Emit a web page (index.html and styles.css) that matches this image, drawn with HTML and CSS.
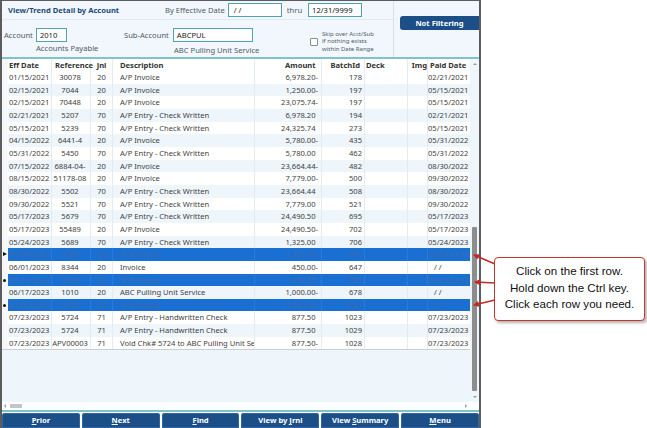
FILE: index.html
```html
<!DOCTYPE html>
<html>
<head>
<meta charset="utf-8">
<link rel="stylesheet" href="styles.css">
</head>
<body>
<div class="page">
  <div class="app">
    <div class="header">
      <div class="hleft">
        <div class="hrow1">
          <div class="title">View/Trend Detail by Account</div>
          <span class="lbl">By Effective Date</span>
          <div class="inp w54">&nbsp;/ /</div>
          <span class="lbl thru">thru</span>
          <div class="inp w54">12/31/9999</div>
        </div>
        <div class="hrow2">
          <div class="fgroup acct">
            <div class="fline"><span class="lbl">Account</span><div class="inp w31">2010</div></div>
            <div class="cap cap-acct">Accounts Payable</div>
          </div>
          <div class="fgroup sub">
            <div class="fline"><span class="lbl">Sub-Account</span><div class="inp w80">ABCPUL</div></div>
            <div class="cap cap-sub">ABC Pulling Unit Service</div>
          </div>
          <div class="skip">
            <span class="chk"></span>
            <span class="skiptext">Skip over Acct/Sub<br>if nothing exists<br>within Date Range</span>
          </div>
        </div>
      </div>
      <div class="hright">
        <div class="filterbtn">Not Filtering</div>
      </div>
    </div>
    <div class="teal"></div>
    <div class="gridwrap">
      <div class="table">
        <div class="row head">
          <span class="ind"></span><span class="c d">Eff Date</span><span class="c r hr">Reference</span><span class="c j">Jnl</span><span class="c ds">Description</span><span class="c a">Amount<i>-</i></span><span class="c b hb">BatchId</span><span class="c dk">Deck</span><span class="c im">Img</span><span class="c p hp">Paid Date</span>
        </div>
        <div class="rows">
          <div class="row"><span class="ind"></span><span class="c d">01/15/2021</span><span class="c r">30078</span><span class="c j">20</span><span class="c ds">A/P Invoice</span><span class="c a">6,978.20-</span><span class="c b">178</span><span class="c dk"></span><span class="c im"></span><span class="c p">02/21/2021</span></div>
          <div class="row alt"><span class="ind"></span><span class="c d">02/15/2021</span><span class="c r">7044</span><span class="c j">20</span><span class="c ds">A/P Invoice</span><span class="c a">1,250.00-</span><span class="c b">197</span><span class="c dk"></span><span class="c im"></span><span class="c p">05/15/2021</span></div>
          <div class="row"><span class="ind"></span><span class="c d">02/15/2021</span><span class="c r">70448</span><span class="c j">20</span><span class="c ds">A/P Invoice</span><span class="c a">23,075.74-</span><span class="c b">197</span><span class="c dk"></span><span class="c im"></span><span class="c p">05/15/2021</span></div>
          <div class="row alt"><span class="ind"></span><span class="c d">02/21/2021</span><span class="c r">5207</span><span class="c j">70</span><span class="c ds">A/P Entry - Check Written</span><span class="c a">6,978.20<i>-</i></span><span class="c b">194</span><span class="c dk"></span><span class="c im"></span><span class="c p">02/21/2021</span></div>
          <div class="row"><span class="ind"></span><span class="c d">05/15/2021</span><span class="c r">5239</span><span class="c j">70</span><span class="c ds">A/P Entry - Check Written</span><span class="c a">24,325.74<i>-</i></span><span class="c b">273</span><span class="c dk"></span><span class="c im"></span><span class="c p">05/15/2021</span></div>
          <div class="row alt"><span class="ind"></span><span class="c d">04/15/2022</span><span class="c r">6441-4</span><span class="c j">20</span><span class="c ds">A/P Invoice</span><span class="c a">5,780.00-</span><span class="c b">435</span><span class="c dk"></span><span class="c im"></span><span class="c p">05/31/2022</span></div>
          <div class="row"><span class="ind"></span><span class="c d">05/31/2022</span><span class="c r">5450</span><span class="c j">70</span><span class="c ds">A/P Entry - Check Written</span><span class="c a">5,780.00<i>-</i></span><span class="c b">462</span><span class="c dk"></span><span class="c im"></span><span class="c p">05/31/2022</span></div>
          <div class="row alt"><span class="ind"></span><span class="c d">07/15/2022</span><span class="c r">6884-04-</span><span class="c j">20</span><span class="c ds">A/P Invoice</span><span class="c a">23,664.44-</span><span class="c b">482</span><span class="c dk"></span><span class="c im"></span><span class="c p">08/30/2022</span></div>
          <div class="row"><span class="ind"></span><span class="c d">08/15/2022</span><span class="c r">51178-08</span><span class="c j">20</span><span class="c ds">A/P Invoice</span><span class="c a">7,779.00-</span><span class="c b">500</span><span class="c dk"></span><span class="c im"></span><span class="c p">09/30/2022</span></div>
          <div class="row alt"><span class="ind"></span><span class="c d">08/30/2022</span><span class="c r">5502</span><span class="c j">70</span><span class="c ds">A/P Entry - Check Written</span><span class="c a">23,664.44<i>-</i></span><span class="c b">508</span><span class="c dk"></span><span class="c im"></span><span class="c p">08/30/2022</span></div>
          <div class="row"><span class="ind"></span><span class="c d">09/30/2022</span><span class="c r">5521</span><span class="c j">70</span><span class="c ds">A/P Entry - Check Written</span><span class="c a">7,779.00<i>-</i></span><span class="c b">521</span><span class="c dk"></span><span class="c im"></span><span class="c p">09/30/2022</span></div>
          <div class="row alt"><span class="ind"></span><span class="c d">05/17/2023</span><span class="c r">5679</span><span class="c j">70</span><span class="c ds">A/P Entry - Check Written</span><span class="c a">24,490.50<i>-</i></span><span class="c b">695</span><span class="c dk"></span><span class="c im"></span><span class="c p">05/17/2023</span></div>
          <div class="row"><span class="ind"></span><span class="c d">05/17/2023</span><span class="c r">55489</span><span class="c j">20</span><span class="c ds">A/P Invoice</span><span class="c a">24,490.50-</span><span class="c b">702</span><span class="c dk"></span><span class="c im"></span><span class="c p">05/17/2023</span></div>
          <div class="row alt"><span class="ind"></span><span class="c d">05/24/2023</span><span class="c r">5689</span><span class="c j">70</span><span class="c ds">A/P Entry - Check Written</span><span class="c a">1,325.00<i>-</i></span><span class="c b">706</span><span class="c dk"></span><span class="c im"></span><span class="c p">05/24/2023</span></div>
          <div class="row sel"><span class="ind"><b class="tri"></b></span><span class="c d">05/24/2023</span><span class="c r">7060</span><span class="c j">20</span><span class="c ds">A/P Invoice</span><span class="c a">1,325.00-</span><span class="c b">702</span><span class="c dk"></span><span class="c im"></span><span class="c p">05/24/2023</span></div>
          <div class="row"><span class="ind"></span><span class="c d">06/01/2023</span><span class="c r">8344</span><span class="c j">20</span><span class="c ds">Invoice</span><span class="c a">450.00-</span><span class="c b">647</span><span class="c dk"></span><span class="c im"></span><span class="c p nd">/ /</span></div>
          <div class="row sel"><span class="ind"><b class="dot"></b></span><span class="c d">06/13/2023</span><span class="c r">8000</span><span class="c j">20</span><span class="c ds">A/P Invoice</span><span class="c a">877.50-</span><span class="c b">667</span><span class="c dk"></span><span class="c im"></span><span class="c p">07/23/2023</span></div>
          <div class="row alt"><span class="ind"></span><span class="c d">06/17/2023</span><span class="c r">1010</span><span class="c j">20</span><span class="c ds">ABC Pulling Unit Service</span><span class="c a">1,000.00-</span><span class="c b">678</span><span class="c dk"></span><span class="c im"></span><span class="c p nd">/ /</span></div>
          <div class="row sel"><span class="ind"><b class="dot"></b></span><span class="c d">07/05/2023</span><span class="c r">5720</span><span class="c j">20</span><span class="c ds">A/P Invoice</span><span class="c a">1,000.00<i>-</i></span><span class="c b">1021</span><span class="c dk"></span><span class="c im"></span><span class="c p nd">/ /</span></div>
          <div class="row"><span class="ind"></span><span class="c d">07/23/2023</span><span class="c r">5724</span><span class="c j">71</span><span class="c ds">A/P Entry - Handwritten Check</span><span class="c a">877.50<i>-</i></span><span class="c b">1023</span><span class="c dk"></span><span class="c im"></span><span class="c p">07/23/2023</span></div>
          <div class="row alt"><span class="ind"></span><span class="c d">07/23/2023</span><span class="c r">5724</span><span class="c j">71</span><span class="c ds">A/P Entry - Handwritten Check</span><span class="c a">877.50<i>-</i></span><span class="c b">1029</span><span class="c dk"></span><span class="c im"></span><span class="c p">07/23/2023</span></div>
          <div class="row last"><span class="ind"></span><span class="c d">07/23/2023</span><span class="c r">APV00003</span><span class="c j">71</span><span class="c ds">Void Chk# 5724 to ABC Pulling Unit Service</span><span class="c a">877.50-</span><span class="c b">1028</span><span class="c dk"></span><span class="c im"></span><span class="c p">07/23/2023</span></div>
        </div>
      </div>
      <div class="vscroll">
        <span class="arr up"></span>
        <span class="track"></span>
        <span class="thumb"></span>
        <span class="arr down"></span>
      </div>
    </div>
    <div class="hscroll">
      <span class="harr left"></span>
      <span class="hthumb"></span>
      <span class="hspace"></span>
      <span class="harr right"></span>
    </div>
    <div class="teal bottomline"></div>
    <div class="buttons">
      <div class="btn"><u>P</u>rior</div>
      <div class="btn"><u>N</u>ext</div>
      <div class="btn"><u>F</u>ind</div>
      <div class="btn">View by <u>J</u>rnl</div>
      <div class="btn">View <u>S</u>ummary</div>
      <div class="btn"><u>M</u>enu</div>
    </div>
  </div>

  <svg class="arrows" width="647" height="428" viewBox="0 0 647 428">
    <defs>
      <marker id="ah" markerWidth="6" markerHeight="6" refX="5" refY="3" orient="auto" markerUnits="userSpaceOnUse">
        <path d="M0,0 L6,3 L0,6 Z" fill="#c62828"/>
      </marker>
    </defs>
    <line x1="495" y1="264" x2="474" y2="255" stroke="#c62828" stroke-width="1.5" marker-end="url(#ah)"/>
    <line x1="495" y1="283" x2="475" y2="282" stroke="#c62828" stroke-width="1.5" marker-end="url(#ah)"/>
    <line x1="495" y1="300" x2="474" y2="305" stroke="#c62828" stroke-width="1.5" marker-end="url(#ah)"/>
  </svg>
  <div class="callout">Click on the first row.<br>Hold down the Ctrl key.<br>Click each row you need.</div>
</div>
</body>
</html>
```
FILE: styles.css
```css
* { box-sizing: border-box; }
html, body { margin: 0; padding: 0; background: #ffffff; }
.page {
  position: relative;
  width: 647px;
  height: 428px;
  overflow: hidden;
  font-family: "Noto Sans", "Open Sans", sans-serif;
  font-size: 7.6px;
  color: #3f3f3f;
}
.app {
  width: 481px;
  height: 428px;
  display: flex;
  flex-direction: column;
  border-left: 2px solid #5c5c5c;
  border-right: 2px solid #5c5c5c;
  border-top: 1px solid #5c5c5c;
  background: #eef6fc;
}
/* header */
.header {
  height: 56px;
  display: flex;
  background: #f1f7fc;
}
.hleft { width: 391px; display: flex; flex-direction: column; }
.hright { flex: 1; border-left: 1px solid #d6e1ea; padding-top: 15px; padding-left: 6px; }
.filterbtn {
  height: 14px;
  background: #1c4f87;
  color: #fff;
  font-weight: 700;
  text-align: center;
  line-height: 14px;
  border-radius: 3px 0 0 3px;
  font-size: 7.6px;
}
.hrow1 {
  height: 19px;
  display: flex;
  align-items: center;
  border-bottom: 1px solid #e1e9f0;
}
.title {
  width: 163px;
  padding-left: 6px;
  font-weight: 700;
  color: #1d4a78;
}
.lbl { color: #4f5b66; white-space: nowrap; }
.inp {
  height: 14px;
  border: 1px solid #4fa5ad;
  background: #fff;
  color: #222;
  line-height: 12px;
  padding-left: 3px;
  white-space: nowrap;
}
.hrow1 .lbl { margin-right: 3px; }
.hrow1 .thru { margin-left: 5px; margin-right: 6px; }
.w54 { width: 54px; }
.w31 { width: 31px; }
.w80 { width: 80px; }
.hrow2 { display: flex; padding-top: 8px; }
.fgroup { display: flex; flex-direction: column; }
.fline { display: flex; align-items: center; gap: 3px; }
.acct { padding-left: 2px; width: 122px; }
.cap { color: #4f5b66; }
.cap-acct { margin-left: 32px; margin-top: 1px; }
.sub { width: 186px; }
.sub .fline { gap: 4px; }
.cap-sub { margin-left: 50px; margin-top: 3px; }
.skip { display: flex; align-items: center; gap: 4px; margin-top: 2px; height: 24px; }
.chk {
  width: 8px; height: 8px;
  border: 1px solid #8c8c8c;
  border-radius: 1px;
  background: #fff;
}
.skiptext { font-size: 6px; line-height: 7.4px; color: #4f5b66; }
.teal { height: 2px; background: #7ec4c8; }
/* grid */
.gridwrap { height: 343px; display: flex; }
.table { width: 468px; display: flex; flex-direction: column; background: #eef6fc; }
.row {
  display: grid;
  grid-template-columns: 6px 44px 39px 22px 142px 67px 43px 43px 20px 42px;
  height: 12.67px;
  line-height: 12.67px;
  background: #ffffff;
}
.row.alt { background: #eef5fb; }
.row.head { height: 12px; line-height: 12px; background: #ffffff; font-weight: 700; color: #333; }
.row .ind { background: #f4f8fb; position: relative; }
.c {
  white-space: nowrap;
  overflow: hidden;
  border-right: 1px solid #e4ecf2;
}
.c i { visibility: hidden; font-style: normal; }
.d { padding-left: 1px; }
.r { text-align: center; padding-right: 2px; }
.head .hr { overflow: visible; padding-left: 3px; text-align: left; }
.j { text-align: center; }
.ds { padding-left: 7px; }
.a { text-align: right; padding-right: 3px; }
.b { text-align: right; padding-right: 2px; }
.head .hb { padding-right: 4px; }
.dk { padding-left: 1px; }
.im { text-align: right; }
.p { text-align: right; padding-right: 2px; border-right: none; }
.head .hp { text-align: left; padding-left: 2px; overflow: visible; }
.p.nd { text-align: left; padding-left: 6px; }
.row.sel { background: #1a6fd2; color: #3d6cab; }
.row.sel .c { border-right-color: #2b7ad6; }
.row.last { border-bottom: 1px solid #c9cfd4; height: 13.67px; }
.tri {
  position: absolute; left: 1px; top: 4px;
  width: 0; height: 0;
  border-left: 4px solid #111;
  border-top: 2.5px solid transparent;
  border-bottom: 2.5px solid transparent;
}
.dot {
  position: absolute; left: 1px; top: 5px;
  width: 3px; height: 3px; border-radius: 50%;
  background: #111;
}
.vscroll {
  width: 9px;
  display: flex;
  flex-direction: column;
  align-items: center;
  background: #eef6fc;
}
.arr { width: 0; height: 0; border-left: 2px solid transparent; border-right: 2px solid transparent; }
.arr.up { border-bottom: 2.5px solid #9a9a9a; margin-top: 4px; margin-bottom: 4px; }
.arr.down { border-top: 2.5px solid #9a9a9a; margin-top: 5px; margin-bottom: 4px; }
.track { flex: 1; }
.thumb { width: 5px; height: 164px; background: #8d8d8d; border-radius: 1px; }
.hscroll {
  height: 8px;
  display: flex;
  align-items: center;
  background: #fbfdfe;
  padding-left: 2px;
  padding-right: 12px;
}
.harr { width: 0; height: 0; border-top: 2px solid transparent; border-bottom: 2px solid transparent; }
.harr.left { border-right: 2.5px solid #9a9a9a; }
.harr.right { border-left: 2.5px solid #9a9a9a; }
.hthumb { width: 12px; height: 4px; background: #c2c6ca; margin-left: 4px; }
.hspace { flex: 1; }
.bottomline { height: 2px; }
.buttons {
  display: flex;
  gap: 2px;
  padding: 1px 0 0 0;
  height: 16px;
  background: #ffffff;
}
.btn {
  flex: 1;
  height: 15px;
  background: #1c4f87;
  color: #fff;
  font-weight: 700;
  text-align: center;
  line-height: 15px;
  border-radius: 3px 3px 0 0;
  box-shadow: inset 0 0 0 1px #2f66a3;
}
.btn u { text-decoration-thickness: 1px; text-underline-offset: 1px; }
/* annotation overlay */
.arrows { position: absolute; left: 0; top: 0; pointer-events: none; }
.callout {
  position: absolute;
  left: 494px;
  top: 257px;
  width: 151px;
  height: 64px;
  border: 1.5px solid #c0392b;
  border-radius: 4px;
  background: #fff;
  box-shadow: 2px 2px 3px rgba(0,0,0,0.3);
  font-family: "Liberation Sans", Arial, sans-serif;
  font-size: 11.6px;
  line-height: 16.5px;
  color: #111;
  text-align: center;
  padding-top: 5px;
}
```
